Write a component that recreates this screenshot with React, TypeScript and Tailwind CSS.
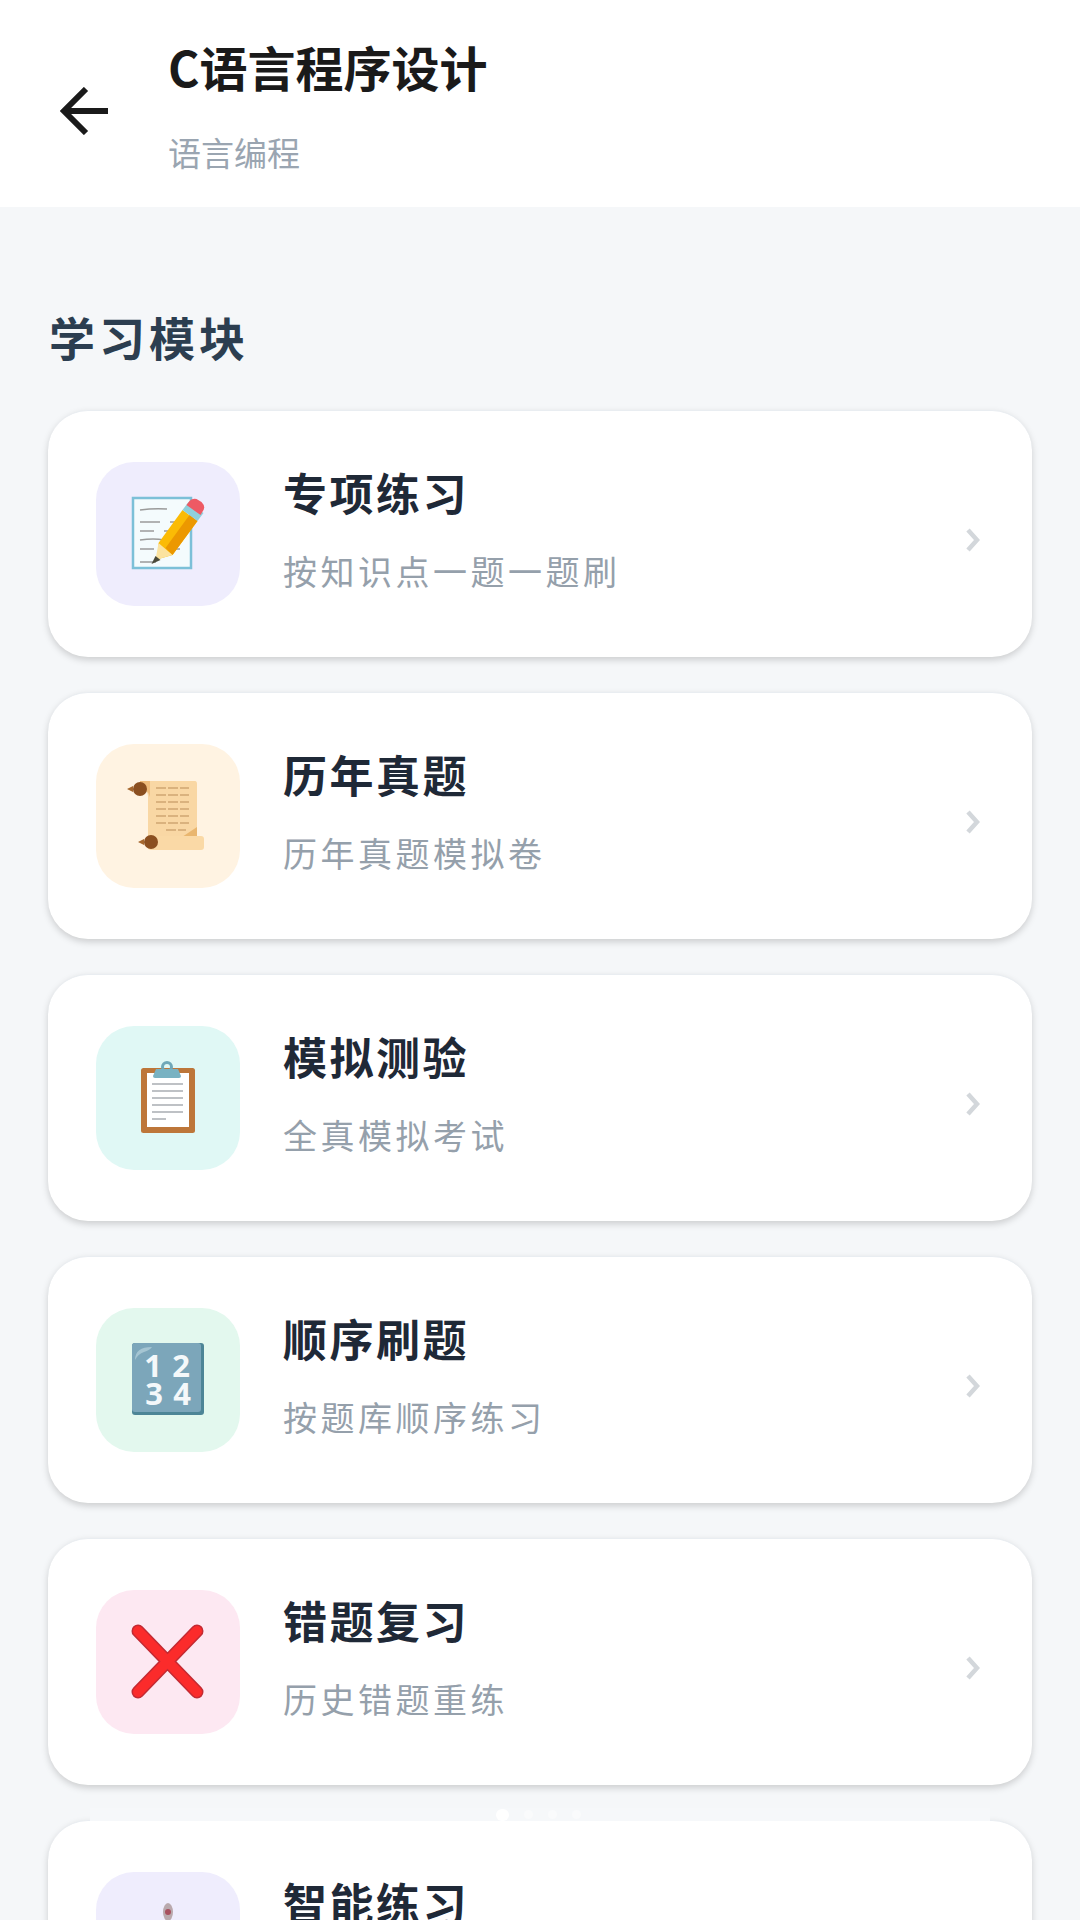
import React from 'react';

const MemoIcon = () => (
  <svg viewBox="0 0 144 144" className="w-full h-full">
    <rect x="37" y="36" width="58" height="70" fill="#f4fbfd" stroke="#7cc0d8" strokeWidth="2.5" />
    <g stroke="#9a9a9a" strokeWidth="1.5" fill="none">
      <path d="M44 48q14-2 27-1" />
      <path d="M44 60h20M74 60h12" />
      <path d="M44 69h14M68 69h10" />
      <path d="M44 78q14-2 24 0" />
      <path d="M44 87h14M78 87h6" />
      <path d="M44 100h16" />
    </g>
    <g transform="translate(-1.5 1)">
      <path d="M64 80 88 47l15 11-25 34-14 4z" fill="#fbbb05" />
      <path d="M71 85 95 52l8 6-25 34z" fill="#ec9800" />
      <path d="M64 80l14 12-14 4-3 1z" fill="#fbe3a0" />
      <path d="M61 93l5 4-9 4z" fill="#4a4a3a" />
      <path d="M88 47l6-8 15 11-6 8z" fill="#8fd0dc" />
      <path d="M92 42l3-4q3-3 7-2l5 3q4 4 2 8l-3 5z" fill="#ee5a64" />
    </g>
  </svg>
);

const ScrollIcon = () => (
  <svg viewBox="0 0 144 144" className="w-full h-full">
    <path d="M44 37h55q2 0 2 3v53H52V52q0-6-8-8z" fill="#f9d7a4" />
    <path d="M44 37h10v16q-2-8-10-9z" fill="#f0bd7d" />
    <path d="M86 93l15-10v10z" fill="#e9b66f" />
    <rect x="52" y="92" width="56" height="14" rx="3" fill="#fad9a6" />
    <g stroke="#cfa671" strokeWidth="1.4" strokeDasharray="10 2" fill="none">
      <path d="M60 44h33M60 51h33M60 58h33M60 65h33M60 72h33M60 79h33M70 86h20" />
    </g>
    <circle cx="44" cy="45" r="7" fill="#8b4f20" />
    <path d="M37 42l-6 3 6 3z" fill="#a5672e" />
    <circle cx="55" cy="98" r="7" fill="#8b4f20" />
    <path d="M48 95l-6 3 6 3z" fill="#a5672e" />
  </svg>
);

const ClipboardIcon = () => (
  <svg viewBox="0 0 144 144" className="w-full h-full">
    <rect x="45" y="42" width="54" height="65" rx="2.5" fill="#bd7639" />
    <rect x="51" y="47" width="42" height="54" fill="#ffffff" />
    <g stroke="#a9adb2" strokeWidth="1.6">
      <path d="M56 58h31M56 65h31M56 72h31M56 79h31M56 86h31M56 93h14" />
    </g>
    <circle cx="71" cy="41" r="4.5" fill="none" stroke="#6fa8b8" strokeWidth="3" />
    <path d="M60 43h22l3 7q0 2-2 2H59q-2 0-2-2z" fill="#79b2c2" />
  </svg>
);

const NumbersIcon = () => (
  <svg viewBox="0 0 144 144" className="w-full h-full">
    <rect x="36" y="35" width="72" height="72" rx="3" fill="#4d8596" />
    <rect x="36" y="35" width="69" height="69" rx="3" fill="#7ca6ba" />
    <path d="M39 52q0-13 17-13-2 3-8 5t-9 8z" fill="#a5c5d2" />
    <g fill="#f4f8fa" fontFamily="'Noto Sans',sans-serif" fontWeight="700" fontSize="31" textAnchor="middle">
      <text x="57" y="69">1</text>
      <text x="85" y="69">2</text>
      <text x="58" y="97">3</text>
      <text x="86" y="97">4</text>
    </g>
  </svg>
);

const CrossIcon = () => (
  <svg viewBox="0 0 144 144" className="w-full h-full">
    <path d="M42 41 101 102M101 41 42 102" stroke="#c32a33" strokeWidth="13" strokeLinecap="round" />
    <path d="M42 41 101 102M101 41 42 102" stroke="#fb2b2b" strokeWidth="10" strokeLinecap="round" />
  </svg>
);

const TargetIcon = () => (
  <svg viewBox="0 0 144 144" className="w-full h-full">
    <ellipse cx="72" cy="40" rx="5" ry="9" fill="#b9a9ad" />
    <circle cx="72" cy="40" r="3" fill="#a8505f" />
  </svg>
);

const modules = [
  { title: '专项练习', desc: '按知识点一题一题刷', bg: 'bg-[#efedfd]', icon: <MemoIcon /> },
  { title: '历年真题', desc: '历年真题模拟卷', bg: 'bg-[#fff3e2]', icon: <ScrollIcon /> },
  { title: '模拟测验', desc: '全真模拟考试', bg: 'bg-[#e0f8f5]', icon: <ClipboardIcon /> },
  { title: '顺序刷题', desc: '按题库顺序练习', bg: 'bg-[#e3f8ee]', icon: <NumbersIcon /> },
  { title: '错题复习', desc: '历史错题重练', bg: 'bg-[#fde8f2]', icon: <CrossIcon /> },
  { title: '智能练习', desc: '', bg: 'bg-[#efedfd]', icon: <TargetIcon /> },
];

export default function App() {
  return (
    <div className="relative w-[1080px] h-[1920px] overflow-hidden bg-[#f5f7f9] font-['Noto_Sans_CJK_SC',sans-serif]">
      <header className="h-[207px] bg-white flex items-center pl-[60px]">
        <svg viewBox="0 0 48 48" className="w-[48px] h-[48px] shrink-0 mt-[15px]" fill="none" stroke="#1a1a1a" strokeWidth="6">
          <path d="M48 24H5M26 2 4 24l22 22" />
        </svg>
        <div className="ml-[60px] flex flex-col">
          <div className="text-[48px] leading-[60px] font-bold text-[#1a1a1a] mt-[3px]">C语言程序设计</div>
          <div className="text-[33px] leading-[44px] text-[#9aa5b1] mt-[34px]">语言编程</div>
        </div>
      </header>

      <main className="px-[48px]">
        <h2 className="text-[46px] leading-[60px] font-bold text-[#2c3e50] tracking-[4px] pl-[1px] mt-[99px] mb-[44px]">学习模块</h2>
        <div className="flex flex-col gap-[35px]">
          {modules.map((item) => (
            <div
              key={item.title}
              className="h-[247px] shrink-0 bg-white rounded-[40px] border-t border-[#e9edf1] shadow-[0_3px_7px_rgba(0,0,0,0.17)] flex items-center pl-[48px] pr-[52px]"
            >
              <div className={`w-[144px] h-[144px] rounded-[38px] shrink-0 ${item.bg}`}>{item.icon}</div>
              <div className="ml-[43px] flex-1 flex flex-col pb-[10px]">
                <div className="text-[44px] leading-[56px] font-bold text-[#1f2937] tracking-[2.5px]">{item.title}</div>
                <div className="h-[48px] text-[34px] leading-[48px] text-[#95a0ab] tracking-[3.5px] mt-[27px]">{item.desc}</div>
              </div>
              <svg viewBox="0 0 14 24" className="w-[14px] h-[24px] shrink-0 mt-[12px]" fill="none" stroke="#d3d7db" strokeWidth="4.5">
                <path d="M2 2l9 10-9 10" />
              </svg>
            </div>
          ))}
        </div>
      </main>

      {/* faint page indicator lying over the list */}
      <div className="absolute left-[90px] right-[90px] top-[1808px] h-[13px] bg-[#f6f8fa] flex items-center pl-[406px] gap-[15px]">
        <span className="w-[13px] h-[12px] rounded-full bg-white" />
        <span className="w-[9px] h-[9px] rounded-full bg-[#fafbfc]" />
        <span className="w-[9px] h-[9px] rounded-full bg-[#fafbfc]" />
        <span className="w-[9px] h-[9px] rounded-full bg-[#fafbfc]" />
      </div>
    </div>
  );
}
